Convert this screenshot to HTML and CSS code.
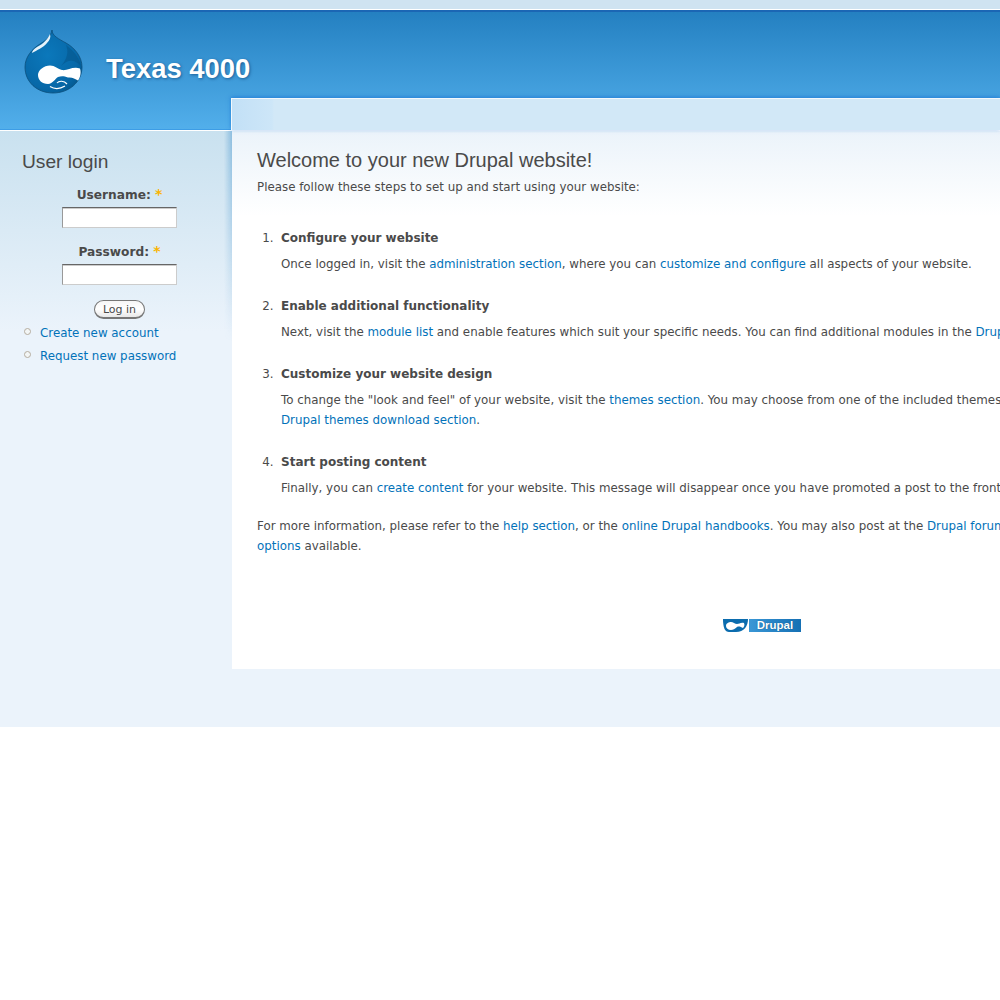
FILE: index.html
```html
<!DOCTYPE html>
<html lang="en">
<head>
    <meta charset="UTF-8">
    <title>Texas 4000</title>
    <link rel="stylesheet" href="styles.css">
</head>
<body>

<div class="top-strip"></div>

<div id="header">
    <div class="logo">
        <svg width="62" height="68" viewBox="0 0 62 68">
            <defs>
                <radialGradient id="dropFill" cx="0.4" cy="0.4" r="0.7">
                    <stop offset="0" stop-color="#0b78bb"/>
                    <stop offset="0.75" stop-color="#0768a8"/>
                    <stop offset="1" stop-color="#04578c"/>
                </radialGradient>
            </defs>
            <path d="M29 2C29 8 36 11 43 15C52 20 59 29 59 39C59 54 46 65 30 65C14 65 2 54 2 39C2 29 9 21 17 16C22 13 28 9 29 2Z" fill="url(#dropFill)" stroke="#0b4f7c" stroke-width="0.8"/>
            <path d="M27 6C25 11 20 16 14 19C11 21 9 23 9 25C14 22 20 20 24 15C27 12 28 9 27 6Z" fill="#e6f2fa"/>
            <path d="M43 17C50 22 56 29 58 38C52 32 46 30 38 38C44 31 46 24 43 17Z" fill="#05558a" opacity="0.55"/>
            <path d="M15 47C15 42 21 37.5 27 37.5C32 37.5 35 41 39 42C44 43 50 38 57 40.5C58.5 45 57 50 55 52.5C52 50.5 49 49 45 49.5C41 48 38 48 35 49C32 51 30 55.5 25 56C19 56 15 52 15 47Z" fill="#fff"/>
            <path d="M27 58.5C31 61 37 61 42 58" fill="none" stroke="#fff" stroke-width="1.3"/>
            <path d="M34 55C36 52.5 41 52.5 44 56" fill="none" stroke="#fff" stroke-width="1.2"/>
        </svg>
    </div>
    <h1 class="site-name">Texas 4000</h1>
    <div class="tab-strip"></div>
</div>

<div id="wrapper">
    <div id="sidebar">
        <h2>User login</h2>
        <form class="login-form">
            <label for="name">Username: <span class="req">*</span></label>
            <input type="text" id="name">
            <label for="pass">Password: <span class="req">*</span></label>
            <input type="password" id="pass">
            <button type="button">Log in</button>
        </form>
        <ul class="side-links">
            <li><a href="#">Create new account</a></li>
            <li><a href="#">Request new password</a></li>
        </ul>
    </div>

    <div id="main">
        <h2>Welcome to your new Drupal website!</h2>
        <p class="intro">Please follow these steps to set up and start using your website:</p>
        <ol>
            <li>
                <strong>Configure your website</strong>
                <p>Once logged in, visit the <a href="#">administration section</a>, where you can <a href="#">customize and configure</a> all aspects of your website.</p>
            </li>
            <li>
                <strong>Enable additional functionality</strong>
                <p>Next, visit the <a href="#">module list</a> and enable features which suit your specific needs. You can find additional modules in the <a href="#">Drupal modules download section</a>.</p>
            </li>
            <li>
                <strong>Customize your website design</strong>
                <p>To change the "look and feel" of your website, visit the <a href="#">themes section</a>. You may choose from one of the included themes or download additional themes from the <a href="#">Drupal themes download section</a>.</p>
            </li>
            <li>
                <strong>Start posting content</strong>
                <p>Finally, you can <a href="#">create content</a> for your website. This message will disappear once you have promoted a post to the front page.</p>
            </li>
        </ol>
        <p class="more">For more information, please refer to the <a href="#">help section</a>, or the <a href="#">online Drupal handbooks</a>. You may also post at the <a href="#">Drupal forum</a>, or view the wide range of other support <a href="#">options</a> available.</p>
        <div class="powered">
            <svg width="25" height="13" viewBox="0 0 25 13">
                <path d="M0 0H25C25 7 21 13 13 13H6C2 13 0 9 0 0Z" fill="#0b6cae"/>
                <path d="M3 7C3 4 6 3 8 3C10 3 12 5 14 5C16 5 18 3 21 4C22 6 21 8 20 9C18 8 16 7 14 8C12 10 10 11 8 11C5 11 3 9 3 7Z" fill="#fff"/>
            </svg>
            <span class="badge">Drupal</span>
        </div>
    </div>
</div>

</body>
</html>
```

FILE: styles.css
```css
html, body {
    margin: 0;
    padding: 0;
    background: #fff;
    overflow-x: hidden;
}

body {
    font-family: "DejaVu Sans", Verdana, sans-serif;
    font-size: 11.85px;
    color: #4a4a4a;
    width: 1000px;
}

a {
    color: #0272b9;
    text-decoration: none;
}

.top-strip {
    height: 9px;
    background: #cfe3f1;
    border-bottom: 1px solid #fff;
}

/* Header */
#header {
    height: 120px;
    display: flex;
    align-items: flex-start;
    position: relative;
    box-sizing: border-box;
    border-top: 2px solid #1b66b4;
    border-bottom: 1px solid #3d9de6;
    background: linear-gradient(#2480c1, #52afeb);
}

.logo {
    margin: 16px 0 0 23px;
    width: 62px;
    height: 68px;
}

.site-name {
    margin: 41px 0 0 21px;
    font-family: "Liberation Sans", Arial, sans-serif;
    font-size: 27.4px;
    line-height: 32px;
    font-weight: bold;
    color: #fff;
    text-shadow: 1px 1px 3px rgba(0, 50, 100, 0.55);
}

.tab-strip {
    position: absolute;
    left: 231px;
    right: 0;
    top: 86px;
    height: 31px;
    border-top: 1px solid #f2f8fc;
    border-left: 1px solid #f2f8fc;
    box-shadow: 0 -1px 4px rgba(20, 110, 210, 0.7);
    background: linear-gradient(90deg, #c2e0f6, #cde6f8 40px, #d2e8f7 42px);
}

/* Columns */
#wrapper {
    display: flex;
    align-items: stretch;
    border-top: 1px solid #fff;
    height: 596px;
    background: #ebf3fb;
}

#sidebar {
    width: 232px;
    flex: none;
    box-sizing: border-box;
    padding: 19px 0 0 22px;
    height: 596px;
    position: relative;
    background: linear-gradient(#c9e1ef, #ebf3fb 200px);
}

/* soft shade down the edge of the main column, fades out */
#sidebar::after {
    content: "";
    position: absolute;
    right: 0;
    top: 0;
    width: 8px;
    height: 210px;
    background: linear-gradient(90deg, rgba(90, 160, 210, 0), rgba(90, 160, 210, 0.55));
    -webkit-mask-image: linear-gradient(#000, transparent);
    mask-image: linear-gradient(#000, transparent);
}

#sidebar h2 {
    margin: 0;
    font-family: "Liberation Sans", Arial, sans-serif;
    font-size: 19.2px;
    font-weight: normal;
    line-height: 24px;
}

.login-form {
    width: 195px;
    margin-top: 10px;
    display: flex;
    flex-direction: column;
    align-items: center;
}

.login-form label {
    font-size: 12.2px;
    font-weight: bold;
    line-height: 20px;
}

.req {
    font-size: 14px;
    color: #fab400;
}

.login-form input {
    box-sizing: border-box;
    width: 115px;
    height: 21px;
    margin: 2px 0 13px;
    padding: 0 2px;
    background: #fff;
    border: 1px solid #ccc;
    border-top-color: #666;
    border-left-color: #999;
    box-shadow: inset 0 1px 0 #ccc;
}

.login-form button {
    box-sizing: border-box;
    width: 51px;
    height: 19px;
    margin-top: 2px;
    padding: 0;
    font-family: "DejaVu Sans", Verdana, sans-serif;
    font-size: 11px;
    color: #4a4a4a;
    background: linear-gradient(#f6f6f6, #fff 50%, #e8e8e8);
    border: 1px solid #777;
    border-bottom: 2px solid #777;
    border-radius: 10px;
}

.side-links {
    list-style: none;
    margin: 3px 0 0;
    padding: 0;
}

.side-links li {
    position: relative;
    padding-left: 18px;
    line-height: 23px;
}

.side-links li::before {
    content: "";
    position: absolute;
    left: 2px;
    top: 6px;
    width: 5px;
    height: 5px;
    border: 1px solid #b5ada0;
    border-radius: 50%;
    background: #f3f6f6;
}

#main {
    flex: none;
    width: 1060px;
    height: 538px;
    box-sizing: border-box;
    padding: 17px 25px 0;
    background: linear-gradient(#ebf3fa, #fff 85px);
    line-height: 20px;
}

#main h2 {
    margin: 0;
    font-family: "Liberation Sans", Arial, sans-serif;
    font-size: 20px;
    font-weight: normal;
    line-height: 24px;
}

.intro {
    margin: 5px 0 0;
}

#main ol {
    margin: 31px 0 0;
    padding: 0 0 0 24px;
}

#main ol li {
    margin-bottom: 22px;
}

#main ol li::marker {
    content: counter(list-item) ".  ";
}

#main ol li strong {
    display: block;
    margin-bottom: 6px;
    font-size: 12px;
}

#main ol li p {
    margin: 0;
}

#main ol li:last-child {
    margin-bottom: 18px;
}

.more {
    margin: 0;
}

.powered {
    display: flex;
    justify-content: center;
    align-items: center;
    margin-top: 63px;
}

.badge {
    width: 52px;
    height: 13px;
    margin-left: 1px;
    background: linear-gradient(90deg, #3a97d6, #1570b4);
    color: #fff;
    font-family: "Liberation Sans", Arial, sans-serif;
    font-size: 11.5px;
    font-weight: bold;
    line-height: 13px;
    text-align: center;
    text-shadow: 0 0 1px #0b4f7c;
}
```
